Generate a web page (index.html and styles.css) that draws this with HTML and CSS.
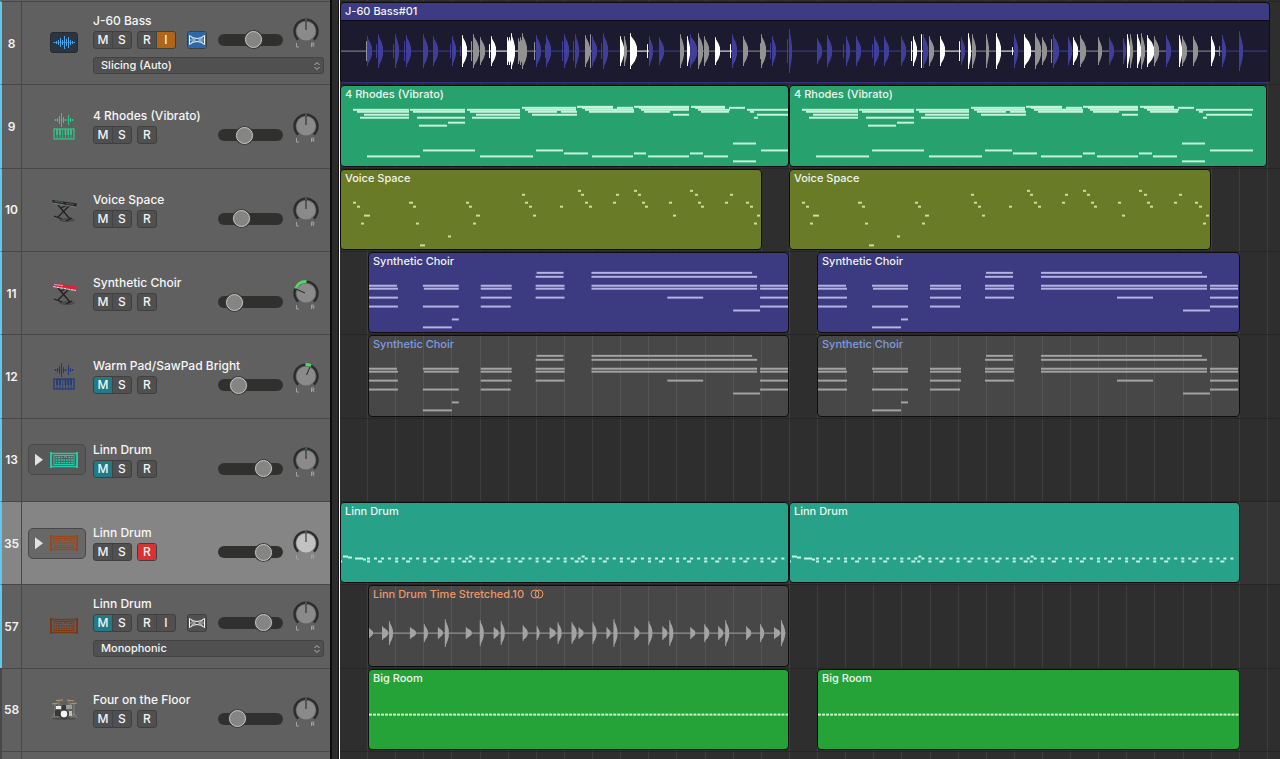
FILE: index.html
```html
<!DOCTYPE html>
<html lang="en">
<head>
    <meta charset="UTF-8">
    <meta name="viewport" content="width=device-width, initial-scale=1.0">
    <title>Tracks</title>
    <link rel="stylesheet" href="styles.css">
</head>
<body>
    <!-- shared icons -->
    <svg class="defs" aria-hidden="true">
        <symbol id="knob" viewBox="0 0 28 32">
            <path d="M6.2 22.6A11.5 11.5 0 1 1 21.8 22.6" fill="none" stroke="#2c2c2c" stroke-width="2.4"/>
            <circle cx="14" cy="14" r="9.6" fill="currentColor"/>
        </symbol>
        <symbol id="lr" viewBox="0 0 28 32">
            <path d="M4.5 26v4h2.5M19.5 30v-4h2q1 1 0 2h-2m1.5 0l1 2" fill="none" stroke="#a0a0a0"/>
        </symbol>
        <symbol id="flex" viewBox="0 0 18 14">
            <path d="M1.500 2.500Q5 5.500 9 5.500T16.500 2.500V11.500Q13 8.500 9 8.500T1.500 11.500Z" fill="none" stroke="currentColor"/>
            <path d="M3 4.500L7.500 7L3 9.500M15 4.500L10.500 7L15 9.500M2 7H6M12 7H16" fill="none" stroke="currentColor" stroke-width=".6"/>
        </symbol>
        <symbol id="wavekeys" viewBox="0 0 28 28">
            <path d="M5.500 7v2M7.500 6v4M9.500 4v8M11.500 1v14M13.500 5v6M15.500 7v2M18.500 3v10M20.500 6v4M22.500 7v2" stroke="currentColor"/>
            <path d="M4 8H24" stroke="currentColor" stroke-width=".5"/>
            <rect x="4" y="17" width="20" height="10" fill="none" stroke="currentColor" stroke-width="1.200"/>
            <path d="M7 17v10M10 17v10M12.700 17v10M15.500 17v10M18.300 17v10M21 17v10" stroke="currentColor" stroke-width=".8"/>
            <path d="M7 17v6M10 17v6M15.500 17v6M18.300 17v6M21 17v6" stroke="currentColor" stroke-width="1.700"/>
        </symbol>
        <symbol id="machine" viewBox="0 0 28 18">
            <path d="M1 1V17M27 1V17" stroke="currentColor" stroke-width="2"/>
            <path d="M2 2.500H26M2 15.500H26" stroke="currentColor" stroke-width="1.600"/>
            <rect x="4" y="4.500" width="20" height="9" fill="none" stroke="currentColor"/>
            <path d="M5.500 6.500H13M18 6.500H23M5.500 9H23M5.500 11.500H23" stroke="currentColor" stroke-width="1.700" stroke-dasharray="1.900 .7"/>
            <path d="M14 6H17" stroke="currentColor" stroke-width="2" opacity=".6"/>
        </symbol>
        <symbol id="stand" viewBox="0 0 28 28">
            <ellipse cx="17" cy="24" rx="8" ry="2" fill="#4c4c4c"/>
            <path d="M8 9L20 23M20 9L8 21M4 20L12 23M16 25L22 22M11 12L17 9" fill="none" stroke="#1f1f1f" stroke-width="1.200"/>
        </symbol>
        <symbol id="arrows" viewBox="0 0 8 10">
            <path d="M1.500 4L4 1.500L6.500 4M1.500 6L4 8.500L6.500 6" fill="none" stroke="#b5b5b5"/>
        </symbol>
    </svg>

    <main class="tracks">
        <svg class="grid" id="grid" viewBox="0 0 940 100" preserveAspectRatio="none" aria-hidden="true"></svg>

        <section class="track">
            <div class="head">
                <span class="num">8</span>
                <div class="icon">
                    <svg width="28" height="22" viewBox="0 0 28 22">
                        <rect x=".5" y=".5" width="27" height="20" rx="2.500" fill="#2b3542" stroke="#252a31"/>
                        <path d="M4.500 10v1M6.500 9v3M8.500 8v5M10.500 6v9M12.500 8v5M14.500 4v13M16.500 7v7M18.500 5v11M20.500 8v5M22.500 9v3M24.500 10v1" stroke="#4ba3e6"/>
                        <path d="M3 10.500H25" stroke="#4ba3e6" stroke-width=".6"/>
                    </svg>
                </div>
                <div class="content">
                    <div class="top">
                        <div class="main">
                            <h2>J-60 Bass</h2>
                            <div class="controls">
                                <div class="group"><button type="button" title="Mute">M</button><button type="button" title="Solo">S</button></div>
                                <div class="group"><button type="button" title="Record">R</button><button type="button" class="input-on" title="Input">I</button></div>
                                <div class="group flexbtn"><button type="button" class="flex-on" aria-label="Flex"><svg width="18" height="14"><use href="#flex"/></svg></button></div>
                                <input type="range" class="volume" aria-label="J-60 Bass volume" value="56">
                            </div>
                        </div>
                        <svg class="knob" viewBox="0 0 28 32"><use href="#knob"/><use href="#lr"/><path d="M14 3V13" stroke="#222"/><path d="M14 2V4" stroke="#35a24a"/></svg>
                    </div>
                    <div class="mode">
                        <select aria-label="Flex mode"><option>Slicing (Auto)</option></select>
                        <svg width="8" height="10"><use href="#arrows"/></svg>
                    </div>
                </div>
            </div>
            <div class="lane">
                <article class="region bass" data-kind="bass" data-width="930"><h3>J-60 Bass#01</h3></article>
            </div>
        </section>

        <section class="track">
            <div class="head">
                <span class="num">9</span>
                <div class="icon green"><svg width="28" height="28"><use href="#wavekeys"/></svg></div>
                <div class="content">
                    <div class="top">
                        <div class="main">
                            <h2>4 Rhodes (Vibrato)</h2>
                            <div class="controls">
                                <div class="group"><button type="button" title="Mute">M</button><button type="button" title="Solo">S</button></div>
                                <div class="group"><button type="button" title="Record">R</button></div>
                                <input type="range" class="volume" aria-label="4 Rhodes volume" value="37">
                            </div>
                        </div>
                        <svg class="knob" viewBox="0 0 28 32"><use href="#knob"/><use href="#lr"/><path d="M14 3V13" stroke="#222"/><path d="M14 2V4" stroke="#35a24a"/></svg>
                    </div>
                </div>
            </div>
            <div class="lane">
                <article class="region rhodes first" data-kind="rhodes" data-width="449"><h3>4 Rhodes (Vibrato)</h3></article>
                <article class="region rhodes second" data-kind="rhodes" data-width="478"><h3>4 Rhodes (Vibrato)</h3></article>
            </div>
        </section>

        <section class="track">
            <div class="head">
                <span class="num">10</span>
                <div class="icon">
                    <svg width="28" height="28" viewBox="0 0 28 28"><use href="#stand"/><path d="M2 4L27 7.500L26 11L3 7Z" fill="#232323"/><path d="M5 5.500L13 6.500M16 7.500L24 8.500" stroke="#3d6b66"/><path d="M3 7L26 11" stroke="#8f8180" stroke-width=".8"/></svg>
                </div>
                <div class="content">
                    <div class="top">
                        <div class="main">
                            <h2>Voice Space</h2>
                            <div class="controls">
                                <div class="group"><button type="button" title="Mute">M</button><button type="button" title="Solo">S</button></div>
                                <div class="group"><button type="button" title="Record">R</button></div>
                                <input type="range" class="volume" aria-label="Voice Space volume" value="31">
                            </div>
                        </div>
                        <svg class="knob" viewBox="0 0 28 32"><use href="#knob"/><use href="#lr"/><path d="M14 3V13" stroke="#222"/><path d="M14 2V4" stroke="#35a24a"/></svg>
                    </div>
                </div>
            </div>
            <div class="lane">
                <article class="region voice first" data-kind="voice" data-width="422"><h3>Voice Space</h3></article>
                <article class="region voice second" data-kind="voice" data-width="422"><h3>Voice Space</h3></article>
            </div>
        </section>

        <section class="track">
            <div class="head">
                <span class="num">11</span>
                <div class="icon">
                    <svg width="28" height="28" viewBox="0 0 28 28"><use href="#stand"/><path d="M2 4L27 7.500L26 11L3 7Z" fill="#e01f38"/><path d="M4 5.500L13 6.500" stroke="#c9a3d8"/><path d="M3 7.500L26 11.500" stroke="#e8d0d2" stroke-width="1.200" stroke-dasharray="3 .6"/></svg>
                </div>
                <div class="content">
                    <div class="top">
                        <div class="main">
                            <h2>Synthetic Choir</h2>
                            <div class="controls">
                                <div class="group"><button type="button" title="Mute">M</button><button type="button" title="Solo">S</button></div>
                                <div class="group"><button type="button" title="Record">R</button></div>
                                <input type="range" class="volume" aria-label="Synthetic Choir volume" value="17">
                            </div>
                        </div>
                        <svg class="knob" viewBox="0 0 28 32"><use href="#knob"/><use href="#lr"/><path d="M3.500 9.500A11.500 11.500 0 0 1 14.500 2.500" fill="none" stroke="#4fd867" stroke-width="2.800"/><path d="M13 14L4 10" stroke="#222"/></svg>
                    </div>
                </div>
            </div>
            <div class="lane">
                <article class="region choir late-first" data-kind="choir" data-width="422"><h3>Synthetic Choir</h3></article>
                <article class="region choir late-second" data-kind="choir" data-width="423"><h3>Synthetic Choir</h3></article>
            </div>
        </section>

        <section class="track">
            <div class="head">
                <span class="num">12</span>
                <div class="icon navy"><svg width="28" height="28"><use href="#wavekeys"/></svg></div>
                <div class="content">
                    <div class="top">
                        <div class="main">
                            <h2>Warm Pad/SawPad Bright</h2>
                            <div class="controls">
                                <div class="group"><button type="button" class="mute-on" title="Mute">M</button><button type="button" title="Solo">S</button></div>
                                <div class="group"><button type="button" title="Record">R</button></div>
                                <input type="range" class="volume" aria-label="Warm Pad volume" value="25">
                            </div>
                        </div>
                        <svg class="knob" viewBox="0 0 28 32"><use href="#knob"/><use href="#lr"/><path d="M13.500 2.500A11.500 11.500 0 0 1 19 3.700" fill="none" stroke="#4fd867" stroke-width="2.800"/><path d="M14.500 13L18 5" stroke="#222"/></svg>
                    </div>
                </div>
            </div>
            <div class="lane">
                <article class="region muted blue-text late-first" data-kind="choir" data-width="422"><h3>Synthetic Choir</h3></article>
                <article class="region muted blue-text late-second" data-kind="choir" data-width="423"><h3>Synthetic Choir</h3></article>
            </div>
        </section>

        <section class="track">
            <div class="head">
                <span class="num">13</span>
                <div class="icon folder teal">
                    <button type="button" class="disclose" aria-label="Open stack"></button>
                    <svg width="28" height="18"><use href="#machine"/></svg>
                </div>
                <div class="content">
                    <div class="top">
                        <div class="main">
                            <h2>Linn Drum</h2>
                            <div class="controls">
                                <div class="group"><button type="button" class="mute-on" title="Mute">M</button><button type="button" title="Solo">S</button></div>
                                <div class="group"><button type="button" title="Record">R</button></div>
                                <input type="range" class="volume" aria-label="Linn Drum volume" value="77">
                            </div>
                        </div>
                        <svg class="knob" viewBox="0 0 28 32"><use href="#knob"/><use href="#lr"/><path d="M14 3V13" stroke="#222"/><path d="M14 2V4" stroke="#35a24a"/></svg>
                    </div>
                </div>
            </div>
            <div class="lane"></div>
        </section>

        <section class="track selected">
            <div class="head">
                <span class="num">35</span>
                <div class="icon folder brown">
                    <button type="button" class="disclose" aria-label="Open stack"></button>
                    <svg width="28" height="18"><use href="#machine"/></svg>
                </div>
                <div class="content">
                    <div class="top">
                        <div class="main">
                            <h2>Linn Drum</h2>
                            <div class="controls">
                                <div class="group"><button type="button" title="Mute">M</button><button type="button" title="Solo">S</button></div>
                                <div class="group"><button type="button" class="record-on" title="Record">R</button></div>
                                <input type="range" class="volume" aria-label="Linn Drum volume" value="77">
                            </div>
                        </div>
                        <svg class="knob" viewBox="0 0 28 32"><use href="#knob"/><use href="#lr"/><path d="M14 3V13" stroke="#222"/><path d="M14 2V4" stroke="#35a24a"/></svg>
                    </div>
                </div>
            </div>
            <div class="lane">
                <article class="region linn first" data-kind="linn" data-width="449"><h3>Linn Drum</h3></article>
                <article class="region linn second" data-kind="linn" data-width="451"><h3>Linn Drum</h3></article>
            </div>
        </section>

        <section class="track">
            <div class="head">
                <span class="num">57</span>
                <div class="icon brown"><svg width="28" height="18"><use href="#machine"/></svg></div>
                <div class="content">
                    <div class="top">
                        <div class="main">
                            <h2>Linn Drum</h2>
                            <div class="controls">
                                <div class="group"><button type="button" class="mute-on" title="Mute">M</button><button type="button" title="Solo">S</button></div>
                                <div class="group"><button type="button" title="Record">R</button><button type="button" title="Input">I</button></div>
                                <div class="group flexbtn"><button type="button" aria-label="Flex"><svg width="18" height="14"><use href="#flex"/></svg></button></div>
                                <input type="range" class="volume" aria-label="Linn Drum audio volume" value="77">
                            </div>
                        </div>
                        <svg class="knob" viewBox="0 0 28 32"><use href="#knob"/><use href="#lr"/><path d="M14 3V13" stroke="#222"/><path d="M14 2V4" stroke="#35a24a"/></svg>
                    </div>
                    <div class="mode">
                        <select aria-label="Flex mode"><option>Monophonic</option></select>
                        <svg width="8" height="10"><use href="#arrows"/></svg>
                    </div>
                </div>
            </div>
            <div class="lane">
                <article class="region muted orange-text late-first" data-kind="stretched" data-width="422">
                    <h3>Linn Drum Time Stretched.10 <svg width="14" height="10" viewBox="0 0 14 10" fill="none" stroke="currentColor"><circle cx="5" cy="5" r="4"/><circle cx="9" cy="5" r="4"/></svg></h3>
                </article>
            </div>
        </section>

        <section class="track last">
            <div class="head">
                <span class="num">58</span>
                <div class="icon">
                    <svg width="28" height="24" viewBox="0 0 28 24" fill="none">
                        <ellipse cx="14" cy="20.500" rx="12" ry="1.500" fill="#4a4a4a"/>
                        <path d="M2 6L8 5M6 2.500L13 2M17 2L24 3M20 6L27 5" stroke="#b99a5e" stroke-width="1.200"/>
                        <path d="M5 6V20M9 3V9M19 3V9M24 6V20M2 20L5 15L8 20M21 20L24 15L27 20" stroke="#8b8b8b" stroke-width=".8"/>
                        <rect x="6" y="8" width="5" height="3" fill="#ececec"/>
                        <rect x="12" y="7" width="4" height="5" fill="#3a3a3a"/>
                        <path d="M17 7V11M19 7V11M21 7V11" stroke="#d5d5d5"/>
                        <rect x="5" y="12" width="5" height="6" fill="#3b3734"/>
                        <rect x="19" y="13" width="3" height="5" fill="#c9bfae"/>
                        <circle cx="14" cy="16" r="4" fill="#f5f5f5" stroke="#262626" stroke-width="1.200"/>
                    </svg>
                </div>
                <div class="content">
                    <div class="top">
                        <div class="main">
                            <h2>Four on the Floor</h2>
                            <div class="controls">
                                <div class="group"><button type="button" title="Mute">M</button><button type="button" title="Solo">S</button></div>
                                <div class="group"><button type="button" title="Record">R</button></div>
                                <input type="range" class="volume" aria-label="Four on the Floor volume" value="23">
                            </div>
                        </div>
                        <svg class="knob" viewBox="0 0 28 32"><use href="#knob"/><use href="#lr"/><path d="M14 3V13" stroke="#222"/><path d="M14 2V4" stroke="#35a24a"/></svg>
                    </div>
                </div>
            </div>
            <div class="lane">
                <article class="region room late-first" data-kind="room" data-width="422"><h3>Big Room</h3></article>
                <article class="region room late-second" data-kind="room" data-width="423"><h3>Big Room</h3></article>
            </div>
        </section>

        <div class="track stub"><div class="head"><span class="num"></span></div><div class="lane"></div></div>
    </main>

    <script src="script.js"></script>
</body>
</html>
```

FILE: styles.css
```css
*{
    margin: 0;
    padding: 0;
    box-sizing: border-box;
}
body{
    min-height: 100vh;
    background-color: #2e2e2e;
    color: #f4f4f4;
    font-family: Inter, "Liberation Sans", sans-serif;
    font-size: 12px;
    display: flex;
    flex-direction: column;
}
.defs{
    position: absolute;
    width: 0;
    height: 0;
}

/* track list */
.tracks{
    flex: 1;
    position: relative;
    display: flex;
    flex-direction: column;
    padding-top: 1px;
    background: linear-gradient(to right, #606060 330px, #0c0c0c 330px 332px, #2b2b2b 332px 338px, #111 338px 339px, #f4f4f4 339px 340px, #2e2e2e 340px);
}
.grid{
    position: absolute;
    top: 0;
    left: 340px;
    width: calc(100% - 340px);
    height: 100%;
}
.track{
    flex: 1 1 0;
    min-height: 76px;
    position: relative;
    display: grid;
    grid-template-columns: 330px 1fr;
    grid-template-rows: minmax(0, 1fr);
    column-gap: 10px;
}
.track.stub{
    flex: 0 0 8px;
    min-height: 0;
}

/* track header */
.head{
    display: flex;
    align-items: center;
    border-top: 1px solid #474747;
    border-left: 2px solid #62c8e8;
    background-color: #606060;
    color: #8a8a8a;
}
.last .head, .stub .head{
    border-left-color: #474747;
}
.selected .head{
    background-color: #858585;
    color: #c2c2c2;
}
.num{
    align-self: stretch;
    width: 20px;
    display: flex;
    align-items: center;
    justify-content: center;
    border-right: 1px solid #474747;
    color: #f4f4f4;
    font-weight: 600;
}
.icon{
    width: 58px;
    height: 31px;
    margin: 0 7px 0 6px;
    padding: 0 8px;
    display: flex;
    align-items: center;
    justify-content: flex-end;
}
.icon.folder{
    justify-content: space-between;
    border: 1px solid #484848;
    border-radius: 5px;
    background-color: #585858;
    padding: 0 7px 0 6px;
}
.selected .icon.folder{
    background-color: #686868;
}
.green{ color: #2ec88a; }
.navy{ color: #20397f; }
.teal{ color: #25c9a8; }
.brown{ color: #783816; }
.selected .brown{ color: #96481f; }
.disclose{
    width: 8px;
    height: 12px;
    border: 0;
    background-color: #e2e2e2;
    clip-path: polygon(0 0, 100% 50%, 0 100%);
}
.content{
    width: 231px;
    display: flex;
    flex-direction: column;
    gap: 8px;
}
.top{
    display: flex;
    justify-content: space-between;
    align-items: flex-end;
}
.main{
    width: 190px;
}
.main h2{
    font-size: 12px;
    line-height: 16px;
    font-weight: 500;
    color: #f6f6f6;
    margin-bottom: 2px;
    white-space: nowrap;
}
.controls{
    display: flex;
    align-items: center;
    gap: 5px;
}
.group{
    display: flex;
    border: 1px solid #3f3f3f;
    border-radius: 3px;
    overflow: hidden;
    background-color: #505050;
}
.group button{
    width: 18px;
    height: 16px;
    border: 0;
    background: none;
    color: #f4f4f4;
    font-family: inherit;
    font-size: 12px;
    line-height: 16px;
    font-weight: 500;
    text-align: center;
}
.group button + button{
    width: 19px;
    border-left: 1px solid #434343;
}
.group .mute-on{ background-color: #237a82; }
.group .record-on{ background-color: #d93232; }
.group .input-on{ background-color: #b06618; }
.group .flex-on{ background-color: #2f68a8; }
.flexbtn{
    margin-left: 6px;
}
.flexbtn svg{
    display: block;
}
.volume{
    appearance: none;
    width: 65px;
    height: 12px;
    margin-left: auto;
    border-radius: 6px;
    background-color: #30312f;
}
.volume::-webkit-slider-thumb{
    appearance: none;
    width: 17px;
    height: 17px;
    border: 1px solid #c9c9c9;
    border-radius: 50%;
    background-color: #858683;
    box-shadow: 0 0 0 1px #3a3a3a;
}
.knob{
    width: 28px;
    height: 32px;
    margin-right: 4px;
}
.mode{
    position: relative;
    width: 231px;
}
.mode select{
    display: block;
    appearance: none;
    width: 100%;
    height: 17px;
    padding: 0 7px;
    border: 1px solid #434343;
    border-radius: 3px;
    background-color: #505050;
    color: #f4f4f4;
    font-family: inherit;
    font-size: 11px;
    line-height: 15px;
    font-weight: 500;
}
.mode svg{
    position: absolute;
    top: 4px;
    right: 3px;
}

/* arrange area, columns are the places where regions start and end */
.lane{
    display: grid;
    grid-template-columns: 28fr 394fr 27fr 28fr 394fr 29fr 27fr 3fr 10fr;
    grid-template-rows: minmax(0, 1fr);
    padding-bottom: 1px;
    border-top: 1px solid #262626;
    min-width: 0;
}
.selected .lane{
    background-color: rgba(255, 255, 255, .03);
}
.region{
    display: grid;
    grid-template: minmax(0, 1fr) / minmax(0, 1fr);
    min-width: 0;
    border: 1px solid #0e0e10;
    border-radius: 4px;
    overflow: hidden;
    color: #f0f4ee;
}
.region h3{
    grid-area: 1 / 1;
    padding: 0 4px;
    font-size: 11px;
    line-height: 17px;
    font-weight: 500;
    white-space: nowrap;
}
.region h3 svg{
    margin-left: 3px;
    vertical-align: -1px;
}
.region .notes{
    grid-area: 1 / 1;
    width: 100%;
    height: 100%;
}
.first{ grid-column: 1 / 4; }
.second{ grid-column: 4 / 7; }
.late-first{ grid-column: 2 / 4; }
.late-second{ grid-column: 5 / 7; }
.rhodes.second{ grid-column: 4 / 8; }
.voice.first{ grid-column: 1 / 3; }
.voice.second{ grid-column: 4 / 6; }

.bass{
    grid-column: 1 / 9;
    background: linear-gradient(#3d3b83 17px, #0a0a18 17px 18px, #1b1a2f 18px);
    border-bottom: 1px solid #34327a;
}
.rhodes{ background-color: #27a26e; }
.voice{ background-color: #697b26; }
.choir{ background-color: #3c3a80; }
.linn{ background-color: #27a288; }
.room{ background-color: #26a338; }
.muted{ background-color: rgba(255, 255, 255, .12); }
.rhodes .notes{ color: #c4f5d8; }
.voice .notes{ color: #cfdc9c; }
.choir .notes{ color: #b4b3e2; }
.linn .notes{ color: #c6f7e6; }
.room .notes{ color: #c6f7c4; }
.muted .notes{ color: #a3a3a3; }
.blue-text{ color: #809be0; }
.orange-text{ color: #ee9768; }
```

FILE: script.js
```js
// notes: x, y, width
var rhodes = [
    [13,25,56],[17,27,52],[24,30,45],[20,33,49],
    [70,25,55],[73,27,52],[77,33,48],[79,41,28],[108,38,17],
    [127,25,53],[130,27,50],[136,30,44],[132,33,48],
    [182,23,54],[185,25,51],[188,27,29],[221,27,16],[192,30,45],
    [237,22,36],[242,23,31],[245,25,32],[249,27,45],[277,23,16],[274,25,20],
    [294,22,55],[299,23,50],[301,25,29],[304,27,26],[330,25,19],[333,30,16],
    [351,22,34],[355,23,30],[358,25,32],[361,27,28],[389,23,16],
    [407,25,57],[410,27,4],[417,30,46],[414,33,4],
    [27,72,53],[83,66,52],[140,72,53],[196,66,27],[224,69,24],[252,72,41],[294,69,12],
    [308,72,41],[350,69,13],[364,72,24],[393,59,23],[393,77,23],[421,66,43]
];
var voice = [
    [13,34,3],[17,38,3],[24,47,6],[21,55,3],[69,34,4],[73,38,3],[76,55,3],[108,68,3],[80,77,5],
    [126,34,3],[129,38,3],[136,47,4],[133,55,3],[182,26,3],[185,34,3],[189,38,3],[193,47,3],
    [220,38,3],[238,22,3],[241,26,3],[245,34,3],[249,38,3],[273,34,3],[276,26,3],
    [294,22,3],[298,26,3],[302,34,3],[305,38,3],[329,34,3],[333,47,3],[350,22,3],[355,26,3],
    [358,34,3],[361,38,3],[385,34,3],[390,26,3],[406,34,3],[410,38,3],[417,47,3],[414,55,3]
];
var choir = [
    [1,34,28],[1,37,29],[1,46,29],[1,55,29],
    [55,34,36],[56,37,35],[55,55,36],[84,68,7],[55,76,29],
    [113,34,31],[113,37,31],[113,46,31],[113,55,30],
    [169,21,27],[168,25,28],[168,34,29],[168,37,29],[168,46,29],
    [224,21,161],[224,25,166],[224,34,166],[224,37,166],
    [300,46,36],[366,59,27],[393,34,28],[393,37,28],[393,46,28],[393,55,28]
];

// drum patterns repeat every beat
var beat = 28.1;
var linn = [[0,60,2],[3,55,5],[8,56,4],[15,57,8],[23,58,3]];
for (var i = 0; i < 15; i++) {
    var b = 27 + i * beat;
    linn.push([b,57,3],[b,60,3],[b + 7,57,3],[b + 11,60,4],[b + 14,57,3],[b + 21,57,3]);
    if (i == 3 || i == 7) {
        linn.push([b + 18,55,3],[b + 17,60,3]);
    }
}
var room = [];
for (var i = 0; i < 105; i++) {
    room.push([1 + i * beat / 7, 46, 3]);
}

// hits: x, half height, width, colour
var bass = [
    [26,10,1,"g"],[27,15,5,"b"],[36,7,1,"b"],[38,17,5,"b"],[53,7,1,"b"],[55,17,4,"b"],[64,10,1,"b"],[66,16,5,"b"],
    [83,17,5,"b"],[93,15,5,"b"],[110,7,1,"b"],[112,15,4,"b"],[120,5,1,"b"],[122,16,5,"w"],[131,10,1,"g"],[133,17,6,"g"],
    [140,14,5,"g"],[149,7,1,"w"],[151,15,5,"w"],[167,14,4,"w"],[169,14,4,"w"],[171,18,4,"w"],[178,13,4,"g"],[180,14,5,"g"],[182,18,5,"g"],[194,9,1,"g"],
    [196,16,5,"b"],[205,7,1,"b"],[206,16,5,"b"],[222,10,1,"b"],[224,17,5,"b"],[233,10,1,"b"],[235,17,4,"b"],[245,16,5,"g"],
    [250,17,1,"g"],[252,15,5,"b"],[261,8,1,"b"],[263,18,5,"b"],[280,15,4,"w"],[284,15,3,"g"],[290,18,7,"w"],
    [307,7,1,"w"],[309,15,4,"b"],[319,14,5,"b"],[340,17,4,"g"],[347,15,3,"w"],[350,17,7,"b"],[358,18,5,"g"],[364,15,5,"g"],
    [375,14,5,"w"],[390,7,1,"w"],[392,17,5,"b"],[403,15,5,"g"],[420,8,1,"g"],[421,17,5,"g"],[430,8,1,"b"],[432,15,4,"b"],
    [447,12,1,"b"],[449,22,3,"b"],[477,13,5,"b"],[487,16,5,"b"],[503,7,1,"b"],[506,15,4,"b"],[516,15,5,"b"],[532,7,1,"b"],
    [534,15,5,"b"],[544,15,5,"b"],[561,15,5,"b"],[571,10,1,"w"],[573,15,4,"w"],[581,17,1,"w"],[583,17,5,"b"],[589,15,5,"g"],
    [600,15,5,"w"],[619,10,1,"w"],[621,14,4,"b"],[628,18,3,"w"],[632,17,4,"g"],[646,17,3,"g"],[656,18,5,"w"],[672,4,1,"w"],
    [674,17,4,"b"],[684,17,7,"w"],[695,18,6,"g"],[702,14,5,"g"],[711,12,1,"g"],[713,17,6,"b"],[728,14,4,"b"],[733,14,5,"w"],
    [740,16,6,"g"],[758,14,4,"g"],[769,14,5,"b"],[783,13,3,"b"],[787,17,3,"w"],[790,17,3,"g"],[797,17,4,"w"],[801,18,4,"g"],
    [807,16,7,"w"],[814,15,5,"g"],[826,16,5,"b"],[839,16,3,"w"],[842,15,5,"g"],[853,15,5,"g"],[871,15,4,"w"],[879,5,1,"g"],
    [882,16,4,"b"],[899,20,4,"b"]
];
var stretched = [
    [1,5,4],[14,7,6],[21,12,4],[42,6,6],[56,9,4],[70,6,5],[77,14,4],[98,6,6],[112,13,4],[126,6,5],[133,12,4],
    [155,8,5],[169,7,3],[182,6,6],[190,11,4],[204,11,5],[211,6,5],[225,11,4],[239,6,4],[246,14,4],[267,7,5],
    [281,12,4],[295,7,5],[302,13,4],[323,6,5],[337,9,5],[351,7,5],[358,13,4],[379,7,5],[393,9,4],[407,6,6],[414,13,4]
];
var colors = { b: "#403e99", g: "#929292", w: "#ffffff" };

function rect(x, y, w, h, fill) {
    return '<rect x="' + x + '" y="' + y + '" width="' + w + '" height="' + h + '" fill="' + fill + '"/>';
}

function drawNotes(list) {
    return list.map(function(n) {
        return rect(n[0] - 1, n[1] - 2, n[2], 2, "currentColor");
    }).join("");
}

// one hit: a sharp attack, then a quick decay
function drawHit(x, mid, h, w, fill) {
    if (w < 2) {
        return rect(x, mid - h, 1, h * 2, fill);
    }
    var s = h * .85, e = h * .25;
    return '<path fill="' + fill + '" d="M' + x + ' ' + (mid - h) + 'h1V' + (mid - s) +
        'L' + (x + w * .7) + ' ' + (mid - h * .55) + 'L' + (x + w) + ' ' + (mid - e) + 'V' + (mid + e) +
        'L' + (x + w * .7) + ' ' + (mid + h * .55) + 'L' + (x + 1) + ' ' + (mid + s) + 'V' + (mid + h) + 'h-1Z"/>';
}

function drawBass(width) {
    var out = rect(0, 48, 26, 1, colors.g);
    bass.forEach(function(hit, i) {
        var end = i + 1 < bass.length ? bass[i + 1][0] : width - 3;
        out += rect(hit[0] - 1, 48, end - hit[0], 1, colors[hit[3]]);
        out += drawHit(hit[0] - 1, 48.5, hit[1], hit[2], colors[hit[3]]);
    });
    return out;
}

function drawStretched(width) {
    var out = rect(0, 47, width - 4, 1, "currentColor");
    stretched.forEach(function(hit) {
        out += drawHit(hit[0] - 1, 47.5, hit[1], hit[2], "currentColor");
    });
    return out;
}

document.querySelectorAll(".region").forEach(function(region) {
    var kind = region.dataset.kind;
    var width = Number(region.dataset.width);
    var html = "";
    switch (kind) {
        case "rhodes": html = drawNotes(rhodes); break;
        case "voice": html = drawNotes(voice); break;
        case "choir": html = drawNotes(choir); break;
        case "linn": html = drawNotes(linn); break;
        case "room": html = drawNotes(room); break;
        case "bass": html = drawBass(width); break;
        case "stretched": html = drawStretched(width); break;
    }
    region.insertAdjacentHTML("beforeend",
        '<svg class="notes" viewBox="0 0 ' + (width - 2) + ' 80" preserveAspectRatio="none" aria-hidden="true">' + html + '</svg>');
});

// beat lines
var lines = "";
for (var i = 1; i < 34; i++) {
    lines += rect(Math.round(i * 28.12) - 1, 0, 1, 100, "#3e3e3e");
}
document.querySelector("#grid").innerHTML = lines;
```
